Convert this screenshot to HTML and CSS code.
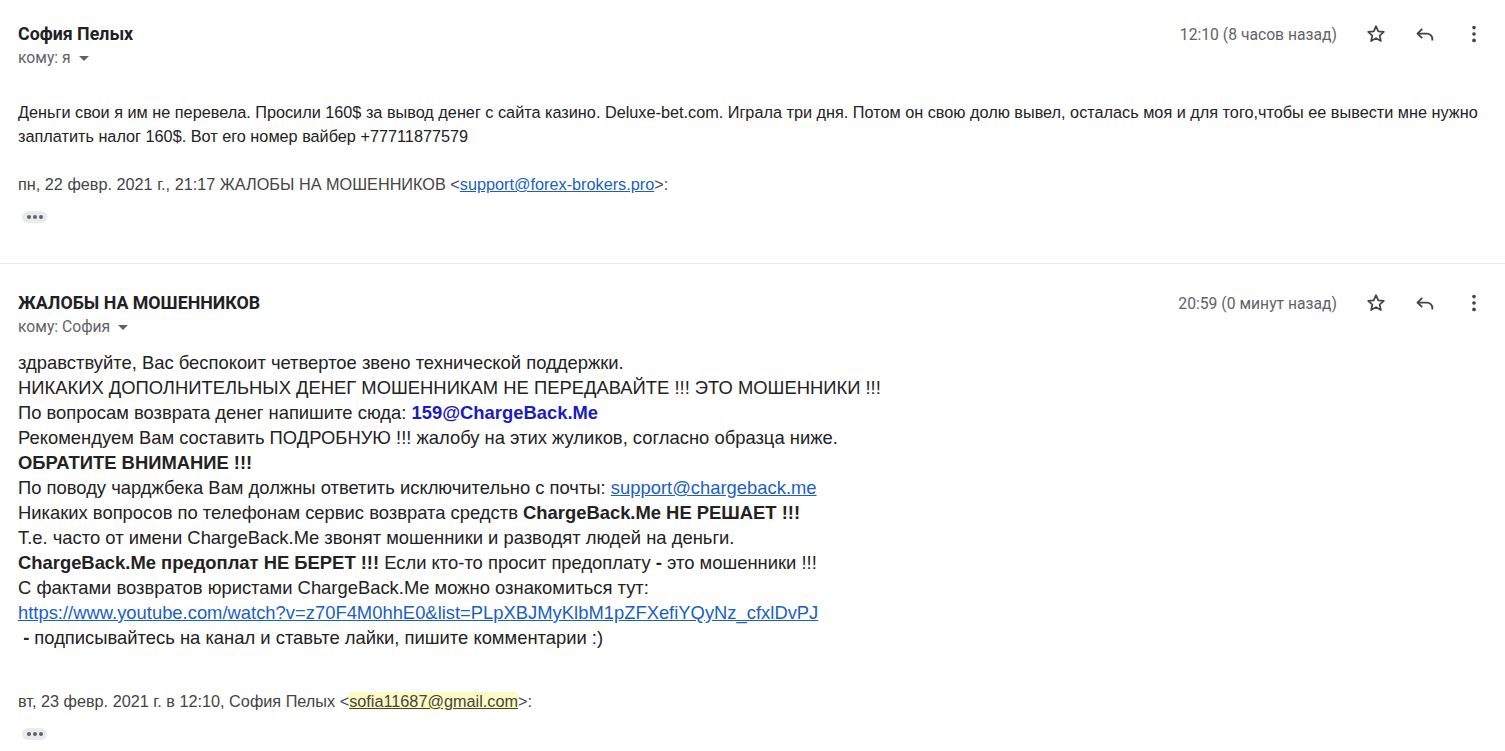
FILE: index.html
```html
<!DOCTYPE html>
<html lang="ru">
<head>
<meta charset="utf-8">
<link rel="stylesheet" href="styles.css">
</head>
<body>
<div class="msg msg-first">
  <div class="hdr">
    <div class="who">
      <div class="name">София Пелых</div>
      <div class="to">кому: я <span class="caret"></span></div>
    </div>
    <div class="meta">
      <span class="time">12:10 (8 часов назад)</span>
      <span class="ico"><svg viewBox="0 0 24 24" width="22" height="22"><path d="M12 3.5l2.47 5.6 6.08.55-4.6 4.03 1.36 5.96L12 16.5l-5.31 3.14 1.36-5.96-4.6-4.03 6.08-.55z" fill="none" stroke="#444" stroke-width="1.9" stroke-linejoin="round"/></svg></span>
      <span class="ico"><svg viewBox="0 0 24 24" width="22" height="22"><path d="M9 6.5L3.8 11.5L9 16.5" fill="none" stroke="#444" stroke-width="2" stroke-linejoin="round"/><path d="M4 11.5H14a6 6 0 0 1 6 6V19" fill="none" stroke="#444" stroke-width="2"/></svg></span>
      <span class="ico"><svg viewBox="0 0 24 24" width="22" height="22"><circle cx="12" cy="5" r="2" fill="#444"/><circle cx="12" cy="12" r="2" fill="#444"/><circle cx="12" cy="19" r="2" fill="#444"/></svg></span>
    </div>
  </div>
  <div class="body small">
    <div>Деньги свои я им не перевела. Просили 160$ за вывод денег с сайта казино. Deluxe-bet.com. Играла три дня. Потом он свою долю вывел, осталась моя и для того,чтобы ее вывести мне нужно заплатить налог 160$. Вот его номер вайбер +77711877579</div>
    <div class="quote">пн, 22 февр. 2021 г., 21:17 ЖАЛОБЫ НА МОШЕННИКОВ &lt;<a class="lnk" href="#">support@forex-brokers.pro</a>&gt;:</div>
    <div class="dots"><i></i><i></i><i></i></div>
  </div>
</div>
<div class="sep"></div>
<div class="msg msg-second">
  <div class="hdr">
    <div class="who">
      <div class="name">ЖАЛОБЫ НА МОШЕННИКОВ</div>
      <div class="to">кому: София <span class="caret"></span></div>
    </div>
    <div class="meta">
      <span class="time">20:59 (0 минут назад)</span>
      <span class="ico"><svg viewBox="0 0 24 24" width="22" height="22"><path d="M12 3.5l2.47 5.6 6.08.55-4.6 4.03 1.36 5.96L12 16.5l-5.31 3.14 1.36-5.96-4.6-4.03 6.08-.55z" fill="none" stroke="#444" stroke-width="1.9" stroke-linejoin="round"/></svg></span>
      <span class="ico"><svg viewBox="0 0 24 24" width="22" height="22"><path d="M9 6.5L3.8 11.5L9 16.5" fill="none" stroke="#444" stroke-width="2" stroke-linejoin="round"/><path d="M4 11.5H14a6 6 0 0 1 6 6V19" fill="none" stroke="#444" stroke-width="2"/></svg></span>
      <span class="ico"><svg viewBox="0 0 24 24" width="22" height="22"><circle cx="12" cy="5" r="2" fill="#444"/><circle cx="12" cy="12" r="2" fill="#444"/><circle cx="12" cy="19" r="2" fill="#444"/></svg></span>
    </div>
  </div>
  <div class="body big">
    <div>здравствуйте, Вас беспокоит четвертое звено технической поддержки.</div>
    <div>НИКАКИХ ДОПОЛНИТЕЛЬНЫХ ДЕНЕГ МОШЕННИКАМ НЕ ПЕРЕДАВАЙТЕ !!! ЭТО МОШЕННИКИ !!!</div>
    <div>По вопросам возврата денег напишите сюда: <b class="navy">159@ChargeBack.Me</b></div>
    <div>Рекомендуем Вам составить ПОДРОБНУЮ !!! жалобу на этих жуликов, согласно образца ниже.</div>
    <div><b>ОБРАТИТЕ ВНИМАНИЕ !!!</b></div>
    <div>По поводу чарджбека Вам должны ответить исключительно с почты: <a class="lnk" href="#">support@chargeback.me</a></div>
    <div>Никаких вопросов по телефонам сервис возврата средств <b>ChargeBack.Me НЕ РЕШАЕТ !!!</b></div>
    <div>Т.е. часто от имени ChargeBack.Me звонят мошенники и разводят людей на деньги.</div>
    <div><b>ChargeBack.Me предоплат НЕ БЕРЕТ !!!</b> Если кто-то просит предоплату <b>-</b> это мошенники !!!</div>
    <div>С фактами возвратов юристами ChargeBack.Me можно ознакомиться тут:</div>
    <div><a class="lnk" href="#">https://www.youtube.com/watch?v=z70F4M0hhE0&amp;list=PLpXBJMyKlbM1pZFXefiYQyNz_cfxlDvPJ</a></div>
    <div>&nbsp;<b>-</b> подписывайтесь на канал и ставьте лайки, пишите комментарии :)</div>
  </div>
  <div class="body small tail">
    <div class="quote">вт, 23 февр. 2021 г. в 12:10, София Пелых &lt;<a class="lnk hl" href="#">sofia11687@gmail.com</a>&gt;:</div>
    <div class="dots"><i></i><i></i><i></i></div>
  </div>
</div>
</body>
</html>
```
FILE: styles.css
```css
html, body {
  margin: 0;
  padding: 0;
  background: #fff;
}
body {
  width: 1505px;
  height: 751px;
  overflow: hidden;
  font-family: Roboto, "Liberation Sans", Arial, sans-serif;
  color: #222;
}
.msg {
  padding: 0 20px 0 18px;
}
.msg-first {
  padding-top: 23px;
  height: 263px;
  box-sizing: border-box;
}
.msg-second {
  padding-top: 28px;
}
.sep {
  height: 1px;
  background: #ececec;
}
.hdr {
  display: flex;
  justify-content: space-between;
  align-items: flex-start;
}
.name {
  font-family: Roboto, sans-serif;
  font-weight: 700;
  font-size: 17.8px;
  line-height: 22px;
  color: #202124;
}
.to {
  font-family: Roboto, sans-serif;
  font-size: 15.7px;
  line-height: 26px;
  color: #5f6368;
  display: flex;
  align-items: center;
}
.caret {
  display: inline-block;
  width: 0;
  height: 0;
  margin-left: 8px;
  margin-top: 1px;
  border-left: 5px solid transparent;
  border-right: 5px solid transparent;
  border-top: 5px solid #5f6368;
}
.meta {
  display: flex;
  align-items: center;
  height: 22px;
}
.time {
  font-family: Roboto, sans-serif;
  font-size: 15.7px;
  color: #5f6368;
  margin-right: 28px;
}
.ico {
  width: 22px;
  height: 22px;
  display: flex;
  margin-left: 27px;
}
.time + .ico {
  margin-left: 0;
}
.body {
  font-family: "Liberation Sans", Arial, sans-serif;
}
.small {
  font-size: 16.25px;
  line-height: 24px;
  color: #222;
}
.msg-first .body {
  margin-top: 29px;
}
.big {
  font-size: 18.4px;
  line-height: 25px;
  color: #222;
  margin-top: 10px;
}
.quote {
  color: #444;
  margin-top: 24px;
}
.tail {
  margin-top: 39px;
}
.tail .quote {
  margin-top: 0;
}
.lnk {
  color: #1a5fc1;
  text-decoration: underline;
}
.hl {
  background: #fdfbc4;
  color: #444;
}
.navy {
  color: #1b1bc0;
}
.dots {
  margin-top: 15px;
  margin-left: 4px;
  width: 25px;
  height: 12px;
  border-radius: 6px;
  background: #e8eaed;
  display: flex;
  justify-content: center;
  align-items: center;
  gap: 2px;
}
.dots i {
  width: 4px;
  height: 4px;
  border-radius: 50%;
  background: #5f6368;
}
```
